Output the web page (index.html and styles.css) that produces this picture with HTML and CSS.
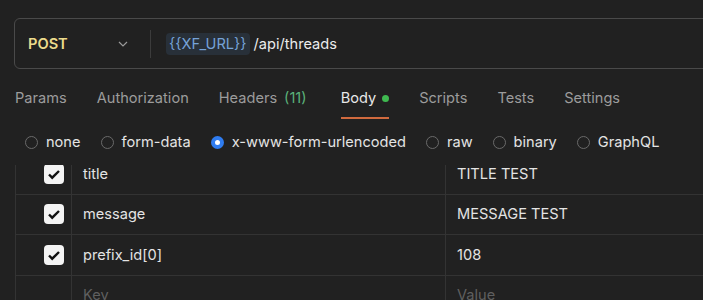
FILE: index.html
```html
<!DOCTYPE html>
<html lang="en">
  <head>
    <meta charset="UTF-8" />
    <title>POST threads</title>
    <link rel="stylesheet" href="styles.css">
  </head>
  <body>
    <div class="request">
      <div class="url-bar">
        <div class="method">
          <span class="method-name">POST</span>
          <svg class="chevron" width="10" height="6" viewBox="0 0 10 6">
            <path d="M1 1l4 4 4-4" fill="none" stroke="#9a9a9a" stroke-width="1.2" />
          </svg>
        </div>
        <div class="url">
          <span class="var">{{XF_URL}}</span>
          <span class="path">/api/threads</span>
        </div>
      </div>

      <nav class="tabs">
        <span class="tab">Params</span>
        <span class="tab">Authorization</span>
        <span class="tab headers">Headers <span class="count">(11)</span></span>
        <span class="tab active">Body <span class="dot"></span></span>
        <span class="tab">Scripts</span>
        <span class="tab">Tests</span>
        <span class="tab">Settings</span>
      </nav>

      <div class="body-types">
        <label class="radio"><span class="circle"></span>none</label>
        <label class="radio"><span class="circle"></span>form-data</label>
        <label class="radio"><span class="circle checked"></span>x-www-form-urlencoded</label>
        <label class="radio"><span class="circle"></span>raw</label>
        <label class="radio"><span class="circle"></span>binary</label>
        <label class="radio"><span class="circle"></span>GraphQL</label>
      </div>

      <div class="table-scroll">
        <div class="kv-table">
          <div class="kv-row">
            <div class="cell check"><span class="box"></span></div>
            <div class="cell key">title</div>
            <div class="cell value">TITLE TEST</div>
          </div>
          <div class="kv-row">
            <div class="cell check"><span class="box"></span></div>
            <div class="cell key">message</div>
            <div class="cell value">MESSAGE TEST</div>
          </div>
          <div class="kv-row">
            <div class="cell check"><span class="box"></span></div>
            <div class="cell key">prefix_id[0]</div>
            <div class="cell value">108</div>
          </div>
          <div class="kv-row">
            <div class="cell check"></div>
            <div class="cell key placeholder">Key</div>
            <div class="cell value placeholder">Value</div>
          </div>
        </div>
      </div>
    </div>
  </body>
</html>
```

FILE: styles.css
```css
* {
  margin: 0;
  padding: 0;
  box-sizing: border-box;
}

body {
  background: #212121;
  color: #e4e4e4;
  font-family: Inter, "Noto Sans", sans-serif;
  font-size: 14.6px;
  overflow: hidden;
  height: 300px;
}

.request {
  padding-top: 18px;
}

.url-bar {
  margin-left: 14px;
  width: 720px;
  height: 51px;
  border: 1px solid #4a4a4a;
  border-radius: 6px;
  display: flex;
  align-items: center;
}

.method {
  width: 136px;
  height: 28px;
  display: flex;
  align-items: center;
  justify-content: space-between;
  padding-left: 13px;
  padding-right: 22px;
  border-right: 1px solid #3c3c3c;
}

.method-name {
  color: #ecdb8c;
  font-weight: 600;
}

.chevron {
  margin-top: 1px;
}

.url {
  padding-left: 15px;
  display: flex;
  align-items: center;
  gap: 4px;
}

.var {
  color: #76a3d8;
  background: #283039;
  border-radius: 4px;
  padding: 2px 3px;
}

.path {
  color: #ececec;
}

.tabs {
  display: flex;
  margin-top: 19px;
  padding-left: 15px;
  gap: 30px;
  height: 38px;
}

.tab {
  color: #9c9c9c;
  line-height: 20px;
  display: flex;
  align-items: flex-start;
  gap: 6px;
}

.tab.headers {
  gap: 7px;
}

.tab .count {
  color: #5bb27a;
}

.tab.active {
  color: #e8e8e8;
  border-bottom: 2px solid #d16a3e;
  height: 31px;
  margin-left: 4px;
}

.dot {
  width: 7px;
  height: 7px;
  border-radius: 50%;
  background: #3fb950;
  margin-top: 7px;
}

.body-types {
  display: flex;
  align-items: center;
  padding-left: 25px;
  height: 30px;
  margin-top: 1px;
  gap: 20px;
}

.radio {
  display: flex;
  align-items: center;
  gap: 8px;
  color: #e4e4e4;
}

.circle {
  width: 13px;
  height: 13px;
  border-radius: 50%;
  border: 1px solid #6a6a6a;
}

.circle.checked {
  border: 4px solid #2f7cf0;
  background: #ffffff;
}

.table-scroll {
  margin-top: 8px;
  margin-left: 15px;
  height: 135px;
  overflow: hidden;
  border-left: 1px solid #333333;
}

.kv-table {
  margin-top: -11px;
}

.kv-row {
  display: grid;
  grid-template-columns: 55px 374px 1fr;
  height: 40.5px;
  border-bottom: 1px solid #333333;
}

.cell {
  display: flex;
  align-items: center;
  padding-left: 11px;
}

.cell.check {
  justify-content: flex-end;
  padding-right: 7px;
}

.cell.key,
.cell.value {
  border-left: 1px solid #333333;
}

.box {
  width: 20px;
  height: 20px;
  border-radius: 4px;
  background: #f4f4f4 url("data:image/svg+xml;utf8,<svg xmlns='http://www.w3.org/2000/svg' viewBox='0 0 20 20'><path d='M5 10.5l3.2 3.2L15 7' fill='none' stroke='%23111' stroke-width='2.4'/></svg>") center / 20px 20px no-repeat;
}

.placeholder {
  color: #5f5f5f;
}
```
